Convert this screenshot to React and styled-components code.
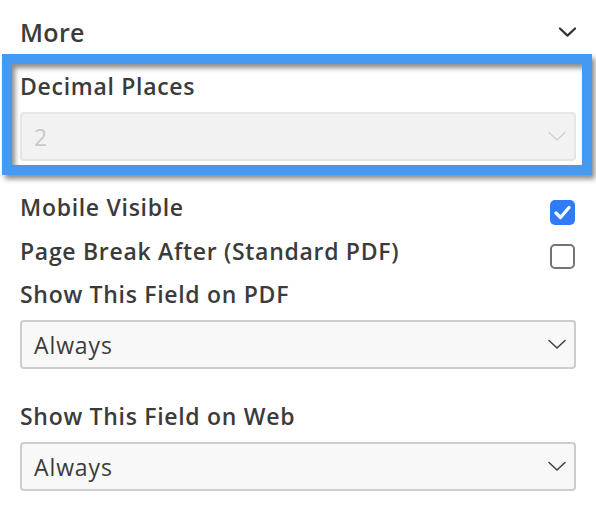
import React from 'react'
import styled, { createGlobalStyle } from 'styled-components'

const Global = createGlobalStyle`
  html, body {
    margin: 0;
    padding: 0;
    background: #fff;
  }

  body {
    font-family: "Open Sans", Lato, Arial, sans-serif;
    color: #3b3b3b;
  }
`

const Panel = styled.div`
  width: 596px;
  padding: 14px 20px 0 20px;
  box-sizing: border-box;
`

const Header = styled.div`
  display: flex;
  align-items: center;
  justify-content: space-between;
  height: 36px;
  margin-bottom: 4px;
`

const Title = styled.span`
  font-size: 25px;
  font-weight: 600;
  letter-spacing: 0.3px;
`

const Highlight = styled.div`
  margin: 0 -16px 0 -18px;
  border: 10px solid #4599f0;
  padding: 6px 6px 4px 8px;
  box-shadow: 3px 4px 5px rgba(0, 0, 0, 0.45),
    inset 3px 4px 5px rgba(0, 0, 0, 0.45);
`

const Label = styled.div`
  font-size: 23px;
  font-weight: 600;
  letter-spacing: 0.7px;
  line-height: 32px;
  margin-bottom: ${p => p.gap || 0}px;
`

const Row = styled.div`
  display: flex;
  align-items: center;
  justify-content: space-between;
  height: 44px;
  margin-top: ${p => p.top || 0}px;
`

const Box = styled.span`
  width: 25px;
  height: 25px;
  box-sizing: border-box;
  border-radius: 5px;
  display: flex;
  align-items: center;
  justify-content: center;
  background: ${p => (p.checked ? '#2f7cf6' : '#fff')};
  border: ${p => (p.checked ? 'none' : '2px solid #747474')};
  margin: 10px 1px 0 0;
`

const Select = styled.div`
  height: 49px;
  box-sizing: border-box;
  display: flex;
  align-items: center;
  justify-content: space-between;
  padding: 0 8px 0 12px;
  border-radius: 4px;
  font-size: 23px;
  letter-spacing: 0.9px;
  background: ${p => (p.disabled ? '#f2f2f2' : '#f8f8f8')};
  border: 2px solid ${p => (p.disabled ? '#e6e6e6' : '#cdcdcd')};
  color: ${p => (p.disabled ? '#c8c8c8' : '#3b3b3b')};
`

const Field = styled.div`
  margin-top: ${p => p.top || 0}px;
  margin-bottom: ${p => p.gap || 0}px;
`

const Chevron = ({ color = '#444', width = 1.6, size = 18 }) => (
  <svg width={size} height={size / 2 + 2} viewBox="0 0 18 11" fill="none">
    <path d="M1 1.5 L9 9 L17 1.5" stroke={color} strokeWidth={width} strokeLinecap="round" strokeLinejoin="round" />
  </svg>
)

const Check = () => (
  <svg width="17" height="15" viewBox="0 0 17 15" fill="none">
    <path d="M2 8 L6.5 12.5 L15 2.5" stroke="#fff" strokeWidth="3.2" strokeLinecap="round" strokeLinejoin="round" />
  </svg>
)

const App = () => (
  <Panel>
    <Global />
    <Header>
      <Title>More</Title>
      <Chevron color="#333" width={2.4} size={17} />
    </Header>
    <Highlight>
      <Field>
        <Label gap={10}>Decimal Places</Label>
        <Select disabled>
          <span>2</span>
          <Chevron color="#d0d0d0" width={1.4} />
        </Select>
      </Field>
    </Highlight>
    <Row top={10}>
      <Label>Mobile Visible</Label>
      <Box checked>
        <Check />
      </Box>
    </Row>
    <Row>
      <Label>Page Break After (Standard PDF)</Label>
      <Box />
    </Row>
    <Field top={5} gap={31}>
      <Label gap={10}>Show This Field on PDF</Label>
      <Select>
        <span>Always</span>
        <Chevron />
      </Select>
    </Field>
    <Field>
      <Label gap={10}>Show This Field on Web</Label>
      <Select>
        <span>Always</span>
        <Chevron />
      </Select>
    </Field>
  </Panel>
)

export default App
